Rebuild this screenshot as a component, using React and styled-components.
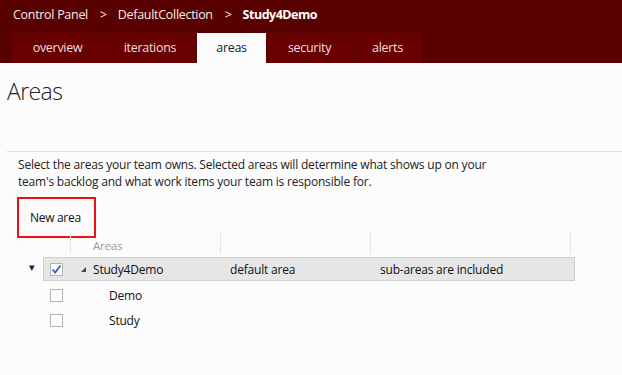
import React from "react";
import styled, { createGlobalStyle } from "styled-components";

const GlobalStyle = createGlobalStyle`
  body {
    margin: 0;
    background: #fcfcfc;
    font-family: "Open Sans", "Noto Sans", sans-serif;
    color: #222;
  }
`;

const tabs = ["overview", "iterations", "areas", "security", "alerts"];

const rows = [
  { name: "Study4Demo", checked: true, selected: true, root: true, col2: "default area", col3: "sub-areas are included" },
  { name: "Demo" },
  { name: "Study" },
];

function CheckIcon() {
  return (
    <svg width="11" height="11" viewBox="0 0 11 11">
      <path d="M1.5 5.5 L4.2 8.5 L9.5 1.5" fill="none" stroke="#3a5fb8" strokeWidth="1.8" />
    </svg>
  );
}

function App() {
  return (
    <>
      <GlobalStyle />
      <Header>
        <Breadcrumb>
          <span>Control Panel</span>
          <Sep>&gt;</Sep>
          <span>DefaultCollection</span>
          <Sep>&gt;</Sep>
          <Current>Study4Demo</Current>
        </Breadcrumb>
        <Tabs>
          {tabs.map((t) => (
            <Tab key={t} active={t === "areas"} wide={t === "overview" || t === "iterations"}>
              {t}
            </Tab>
          ))}
        </Tabs>
      </Header>

      <Title>Areas</Title>
      <Divider />

      <Body>
        <Description>
          Select the areas your team owns. Selected areas will determine what shows up on your
          <br />
          team's backlog and what work items your team is responsible for.
        </Description>

        <NewArea>New area</NewArea>

        <Grid>
          <HeadRow>
            <HeadCell w={28} />
            <HeadCell w={150} pad={22}>Areas</HeadCell>
            <HeadCell w={150} />
            <HeadCell w={200} />
          </HeadRow>
          {rows.map((r) => (
            <RowWrap key={r.name}>
              <Expander>{r.root ? "▾" : ""}</Expander>
              <Row selected={r.selected}>
                <CheckCell>
                  <Box>{r.checked && <CheckIcon />}</Box>
                </CheckCell>
                <NameCell>
                  {r.root ? <Twisty /> : <Indent />}
                  {r.name}
                </NameCell>
                <Cell w={150}>{r.col2}</Cell>
                <Cell w={200}>{r.col3}</Cell>
              </Row>
            </RowWrap>
          ))}
        </Grid>
      </Body>
    </>
  );
}

export default App;

const Header = styled.div`
  background: #590000;
  height: 63px;
  display: flex;
  flex-direction: column;
`;

const Breadcrumb = styled.div`
  height: 33px;
  display: flex;
  align-items: center;
  padding: 0 0 4px 13px;
  box-sizing: border-box;
  color: #f4eaea;
  font-size: 12.5px;
  letter-spacing: -0.3px;
`;

const Sep = styled.span`
  margin: 0 11px 0 12px;
`;

const Current = styled.span`
  font-weight: 700;
  color: #fff;
  letter-spacing: -0.5px;
`;

const Tabs = styled.div`
  display: flex;
  gap: 1px;
  padding-left: 12px;
  height: 30px;
`;

const Tab = styled.div`
  width: ${(p) => (p.wide ? "91px" : "69px")};
  &:nth-child(2) { width: 92px; }
  &:nth-child(4) { width: 85px; }
  display: flex;
  align-items: center;
  justify-content: center;
  background: ${(p) => (p.active ? "#fcfcfc" : "#690000")};
  color: ${(p) => (p.active ? "#222" : "#f0dede")};
  font-size: 12.5px;
  letter-spacing: -0.3px;
  padding-bottom: 2px;
  box-sizing: border-box;
`;

const Title = styled.h1`
  margin: 0;
  padding: 12px 0 0 7px;
  height: 88px;
  box-sizing: border-box;
  font-size: 23px;
  font-weight: 300;
  color: #222;
  letter-spacing: -0.6px;
`;

const Divider = styled.div`
  margin-left: 7px;
  border-top: 1px solid #dedede;
`;

const Body = styled.div`
  padding: 4px 0 0 18px;
`;

const Description = styled.p`
  margin: 0;
  font-size: 12px;
  line-height: 17px;
  letter-spacing: -0.2px;
  color: #222;
`;

const NewArea = styled.div`
  margin: 7px 0 0 -1px;
  width: 79px;
  height: 41px;
  border: 2px solid #ee1111;
  box-sizing: border-box;
  display: flex;
  align-items: center;
  padding-left: 11px;
  font-size: 12px;
  letter-spacing: -0.3px;
  color: #111;
`;

const Grid = styled.div`
  margin: -6px 0 0 25px;
  display: flex;
  flex-direction: column;
`;

const HeadRow = styled.div`
  display: flex;
  height: 22px;
`;

const HeadCell = styled.div`
  width: ${(p) => p.w}px;
  border-right: 1px solid #e6e6e6;
  box-sizing: border-box;
  padding: 6px 0 0 ${(p) => p.pad || 0}px;
  font-size: 11.5px;
  color: #999;
  letter-spacing: -0.2px;
`;

const RowWrap = styled.div`
  position: relative;
  margin-top: 3px;
  &:first-of-type { margin-top: 5px; }
`;

const Expander = styled.span`
  position: absolute;
  left: -14px;
  top: 2px;
  font-size: 11px;
  color: #222;
`;

const Row = styled.div`
  display: flex;
  align-items: center;
  width: 532px;
  height: ${(p) => (p.selected ? "24px" : "22px")};
  box-sizing: border-box;
  background: ${(p) => (p.selected ? "#e6e6e6" : "transparent")};
  border: 1px solid ${(p) => (p.selected ? "#cfcfcf" : "transparent")};
  font-size: 12px;
  letter-spacing: -0.2px;
  color: #111;
`;

const CheckCell = styled.div`
  width: 27px;
  padding-left: 6px;
  box-sizing: border-box;
  display: flex;
  align-items: center;
`;

const Box = styled.div`
  width: 13px;
  height: 13px;
  box-sizing: border-box;
  border: 1px solid #b4b4b4;
  background: #fdfdfd;
  display: flex;
  align-items: center;
  justify-content: center;
`;

const NameCell = styled.div`
  width: 150px;
  display: flex;
  align-items: center;
  padding-left: 10px;
  box-sizing: border-box;
`;

const Twisty = styled.span`
  width: 0;
  height: 0;
  border-left: 5px solid transparent;
  border-bottom: 5px solid #444;
  margin-right: 7px;
`;

const Indent = styled.span`
  width: 28px;
`;

const Cell = styled.div`
  width: ${(p) => p.w}px;
  padding-left: 9px;
  box-sizing: border-box;
`;
